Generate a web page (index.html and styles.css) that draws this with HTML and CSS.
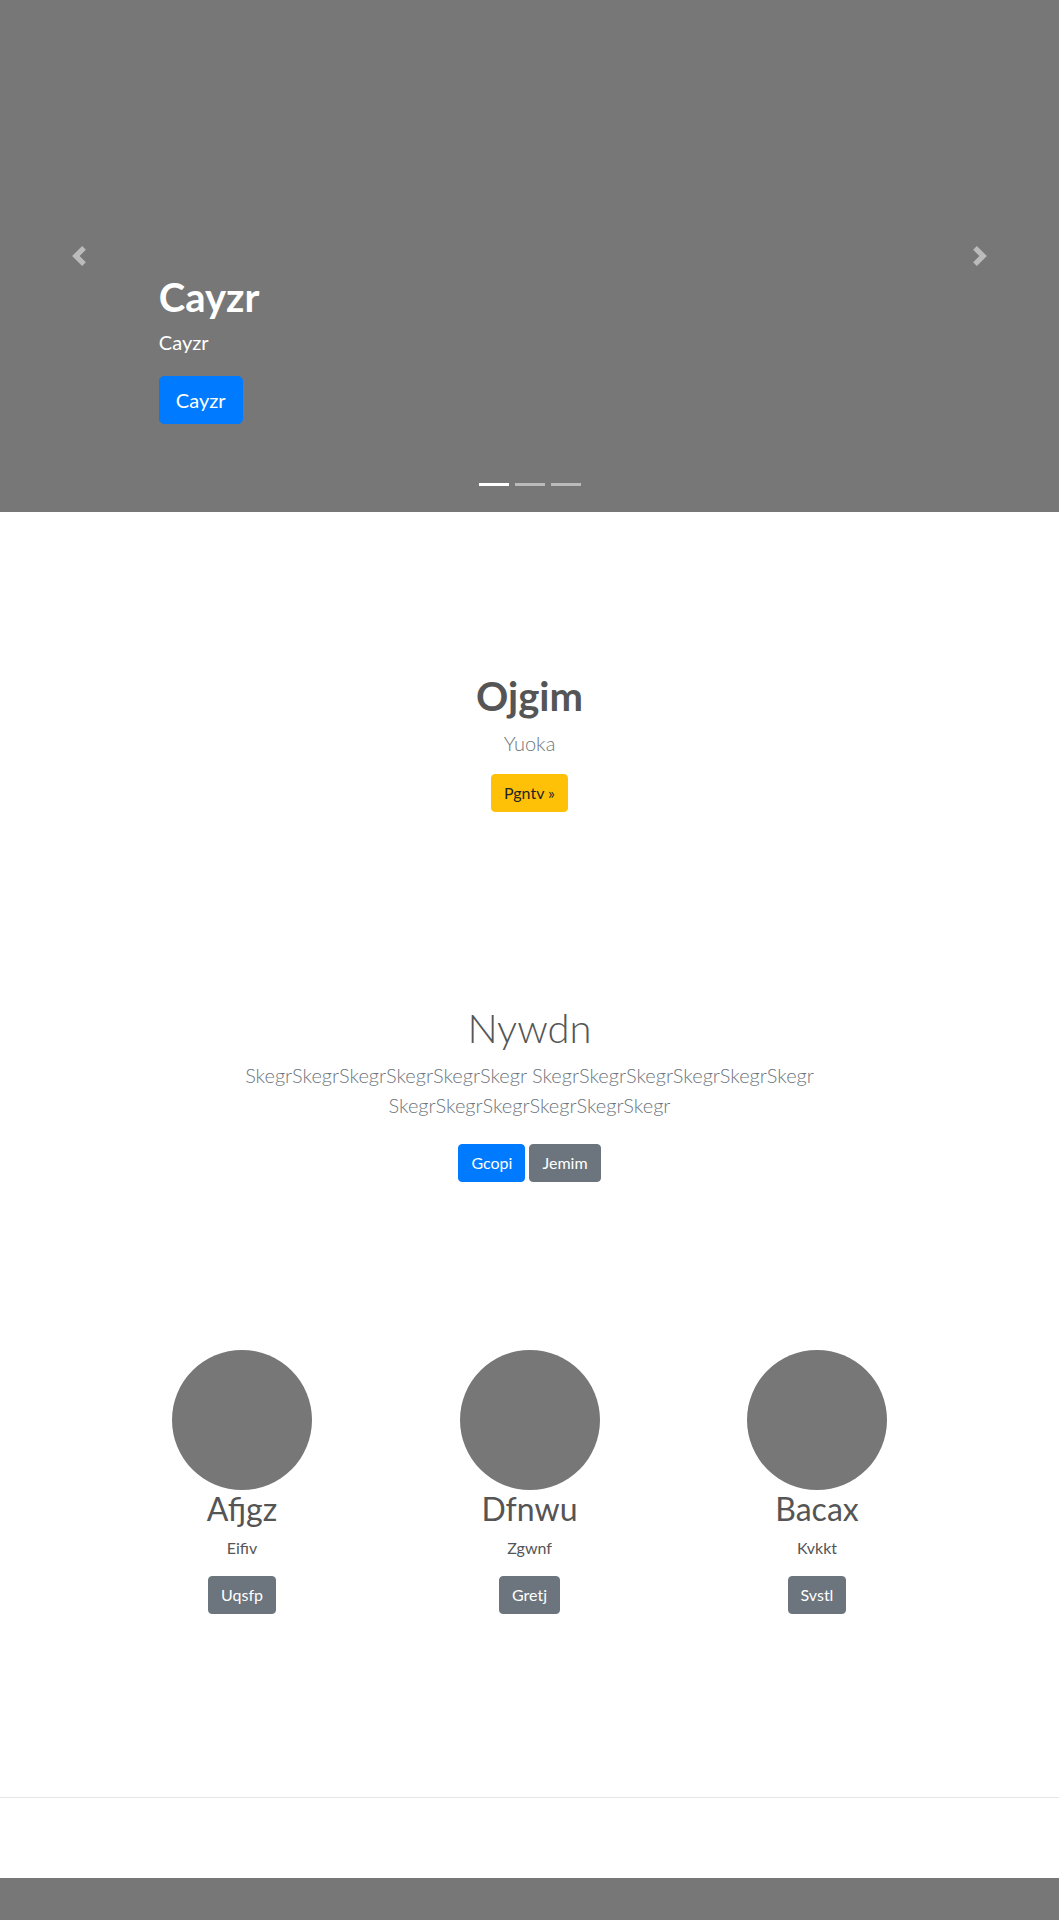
FILE: index.html
```html
<!DOCTYPE html>
<html lang="en">
<head>
<meta charset="utf-8">
<title>Cayzr</title>
<link rel="stylesheet" href="styles.css">
</head>
<body>
<div class="carousel">
  <div class="caption">
    <h1 class="caption-title">Cayzr</h1>
    <p class="caption-text">Cayzr</p>
    <p class="caption-action"><a class="btn btn-lg btn-primary" href="#">Cayzr</a></p>
  </div>
  <a class="control control-prev" href="#" aria-label="Previous">
    <svg width="20" height="20" viewBox="0 0 8 8"><path fill="#fff" d="M5.25 0l-4 4 4 4 1.5-1.5-2.5-2.5 2.5-2.5-1.5-1.5z"/></svg>
  </a>
  <a class="control control-next" href="#" aria-label="Next">
    <svg width="20" height="20" viewBox="0 0 8 8"><path fill="#fff" d="M2.75 0l-1.5 1.5 2.5 2.5-2.5 2.5 1.5 1.5 4-4-4-4z"/></svg>
  </a>
  <ol class="indicators">
    <li class="active"></li>
    <li></li>
    <li></li>
  </ol>
</div>

<section class="intro">
  <h1 class="intro-title">Ojgim</h1>
  <p class="lead muted">Yuoka</p>
  <p class="intro-action"><a class="btn btn-warning" href="#">Pgntv »</a></p>
</section>

<section class="album">
  <div class="album-inner">
    <h1 class="album-title">Nywdn</h1>
    <p class="lead muted">SkegrSkegrSkegrSkegrSkegrSkegr SkegrSkegrSkegrSkegrSkegrSkegr SkegrSkegrSkegrSkegrSkegrSkegr</p>
    <p class="album-actions"><a class="btn btn-primary" href="#">Gcopi</a> <a class="btn btn-secondary" href="#">Jemim</a></p>
  </div>
</section>

<section class="marketing">
  <div class="feature">
    <div class="circle"></div>
    <h2 class="feature-title">Afjgz</h2>
    <p class="feature-text">Eifiv</p>
    <p class="feature-action"><a class="btn btn-secondary" href="#">Uqsfp</a></p>
  </div>
  <div class="feature">
    <div class="circle"></div>
    <h2 class="feature-title">Dfnwu</h2>
    <p class="feature-text">Zgwnf</p>
    <p class="feature-action"><a class="btn btn-secondary" href="#">Gretj</a></p>
  </div>
  <div class="feature">
    <div class="circle"></div>
    <h2 class="feature-title">Bacax</h2>
    <p class="feature-text">Kvkkt</p>
    <p class="feature-action"><a class="btn btn-secondary" href="#">Svstl</a></p>
  </div>
</section>

<hr class="divider">

<footer class="footer"></footer>
</body>
</html>
```

FILE: styles.css
```css
* { box-sizing: border-box; }

html, body {
  margin: 0;
  padding: 0;
}

body {
  font-family: "Segoe UI", Lato, "Open Sans", sans-serif;
  font-size: 16px;
  line-height: 1.5;
  color: #555;
  background: #fff;
}

h1, h2, p { margin: 0; }

.btn {
  display: inline-block;
  font-size: 16px;
  line-height: 24px;
  padding: 6px 12px;
  border: 1px solid transparent;
  border-radius: 4px;
  text-decoration: none;
  font-weight: 400;
  vertical-align: middle;
}
.btn-lg {
  font-size: 20px;
  line-height: 30px;
  padding: 8px 16px;
  border-radius: 5px;
}
.btn-primary { background: #007bff; border-color: #007bff; color: #fff; }
.btn-secondary { background: #6c757d; border-color: #6c757d; color: #fff; }
.btn-warning { background: #ffc107; border-color: #ffc107; color: #212529; }

/* Carousel */
.carousel {
  position: relative;
  height: 512px;
  background: #777;
  overflow: hidden;
}
.caption {
  position: absolute;
  left: 15%;
  right: 15%;
  top: 273px;
  color: #fff;
  text-align: left;
}
.caption-title {
  font-size: 40px;
  line-height: 48px;
  font-weight: 700;
  margin-bottom: 6px;
}
.caption-text {
  font-size: 20px;
  line-height: 30px;
  margin-bottom: 19px;
}
.caption-action { line-height: 1; }

.control {
  position: absolute;
  top: 0;
  bottom: 0;
  width: 15%;
  display: flex;
  align-items: center;
  justify-content: center;
  opacity: 0.5;
}
.control-prev { left: 0; }
.control-next { right: 0; }
.control svg { display: block; }

.indicators {
  position: absolute;
  left: 0;
  right: 0;
  top: 483px;
  display: flex;
  justify-content: center;
  margin: 0;
  padding: 0;
  list-style: none;
}
.indicators li {
  width: 30px;
  height: 3px;
  margin: 0 3px;
  background: rgba(255,255,255,0.5);
}
.indicators li.active { background: #fff; }

/* Intro */
.intro {
  text-align: center;
  padding-top: 160px;
}
.intro-title {
  font-size: 40px;
  line-height: 48px;
  font-weight: 700;
  margin-bottom: 8px;
}
.lead {
  font-size: 20px;
  line-height: 30px;
  font-weight: 300;
}
.muted { color: #6c757d; }
.intro .lead { margin-bottom: 16px; }
.intro-action { line-height: 1; }

/* Album */
.album {
  text-align: center;
  padding-top: 192px;
}
.album-inner {
  width: 610px;
  margin: 0 auto;
}
.album-title {
  font-size: 40px;
  line-height: 48px;
  font-weight: 300;
  margin-bottom: 8px;
}
.album .lead { margin-bottom: 16px; }
.album-actions { line-height: 1; }
.album-actions .btn { margin-top: 8px; }

/* Marketing */
.marketing {
  display: grid;
  grid-template-columns: repeat(3, 287.5px);
  justify-content: center;
  padding-top: 168px;
  text-align: center;
}
.circle {
  width: 140px;
  height: 140px;
  border-radius: 50%;
  background: #777;
  margin: 0 auto;
}
.feature-title {
  font-size: 32px;
  line-height: 38.4px;
  font-weight: 400;
  margin-bottom: 8px;
}
.feature-text { margin-bottom: 16px; }
.feature-action { line-height: 1; }

.divider {
  border: 0;
  border-top: 1px solid rgba(0,0,0,0.1);
  margin: 183px 0 0;
}

.footer {
  margin-top: 80px;
  height: 60px;
  background: #777;
}
```
